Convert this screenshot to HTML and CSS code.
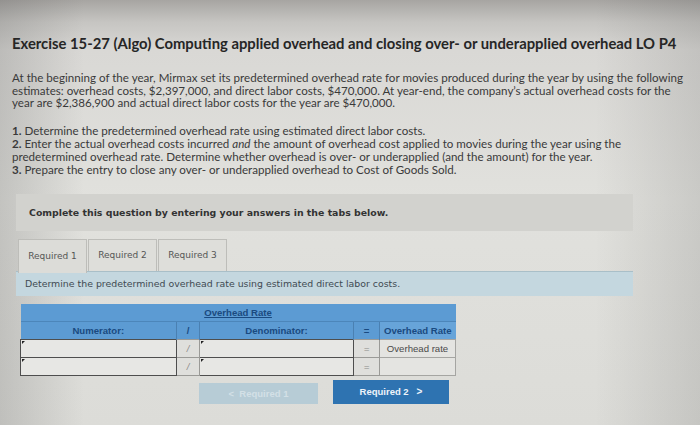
FILE: index.html
```html
<!DOCTYPE html>
<html>
<head>
<meta charset="utf-8">
<link rel="stylesheet" href="styles.css">
</head>
<body>
<div class="page">
  <h1 class="title">Exercise 15-27 (Algo) Computing applied overhead and closing over- or underapplied overhead LO P4</h1>
  <p class="intro">At the beginning of the year, Mirmax set its predetermined overhead rate for movies produced during the year by using the following estimates: overhead costs, $2,397,000, and direct labor costs, $470,000. At year-end, the company’s actual overhead costs for the year are $2,386,900 and actual direct labor costs for the year are $470,000.</p>
  <div class="reqs">
    <div class="req"><span class="num">1.</span> Determine the predetermined overhead rate using estimated direct labor costs.</div>
    <div class="req"><span class="num">2.</span> Enter the actual overhead costs incurred <span class="em">and</span> the amount of overhead cost applied to movies during the year using the<br><span class="line">predetermined overhead rate. Determine whether overhead is over- or underapplied (and the amount) for the year.</span></div>
    <div class="req"><span class="num">3.</span> Prepare the entry to close any over- or underapplied overhead to Cost of Goods Sold.</div>
  </div>
  <div class="notice">Complete this question by entering your answers in the tabs below.</div>
  <div class="tabs">
    <div class="tab active">Required 1</div>
    <div class="tab">Required 2</div>
    <div class="tab">Required 3</div>
  </div>
  <div class="band">Determine the predetermined overhead rate using estimated direct labor costs.</div>
  <table class="grid">
    <colgroup>
      <col class="c-num"><col class="c-op"><col class="c-den"><col class="c-op2"><col class="c-res">
    </colgroup>
    <tr class="h1"><th colspan="5"><span>Overhead Rate</span></th></tr>
    <tr class="h2">
      <th>Numerator:</th>
      <th>/</th>
      <th>Denominator:</th>
      <th>=</th>
      <th>Overhead Rate</th>
    </tr>
    <tr class="row">
      <td class="inp"><span class="mark"></span></td>
      <td class="op">/</td>
      <td class="inp"><span class="mark"></span></td>
      <td class="op">=</td>
      <td class="res">Overhead rate</td>
    </tr>
    <tr class="row">
      <td class="inp"><span class="mark"></span></td>
      <td class="op">/</td>
      <td class="inp"><span class="mark"></span></td>
      <td class="op">=</td>
      <td class="res"></td>
    </tr>
  </table>
  <div class="nav">
    <div class="btn prev">&lt;&nbsp;&nbsp;Required 1</div>
    <div class="btn next">Required 2&nbsp;&nbsp;&nbsp;<span class="chev">&gt;</span></div>
  </div>
</div>
</body>
</html>
```
FILE: styles.css
```css
html, body {
  margin: 0;
  padding: 0;
}
body {
  width: 700px;
  height: 425px;
  overflow: hidden;
  background:
    linear-gradient(to right, rgba(60,60,60,0.18) 0, rgba(60,60,60,0) 12%, rgba(60,60,60,0) 85%, rgba(60,60,60,0.14) 100%),
    linear-gradient(to bottom, #a7a5a2 0, #c6c5c2 22px, #d9d8d5 50px, #e1e1dd 200px, #dcdcd8 425px);
  font-family: Lato, "Open Sans", sans-serif;
  color: #2d2d2d;
}
.page {
  padding: 34px 0 0 12px;
}
.title {
  margin: 0;
  font-family: Lato, sans-serif;
  font-weight: 700;
  font-size: 14.8px;
  line-height: 18px;
  color: #262626;
  white-space: nowrap;
}
.intro {
  margin: 20px 0 0 0;
  font-size: 11.6px;
  line-height: 12.6px;
  color: #3a3a3a;
  width: 676px;
}
.reqs {
  margin-top: 14px;
  font-size: 11.6px;
  line-height: 13.2px;
  color: #3a3a3a;
  width: 640px;
}
.num {
  font-weight: 700;
}
.em {
  font-style: italic;
}
.notice {
  margin: 17px 0 0 4px;
  height: 37px;
  padding-left: 13px;
  box-sizing: border-box;
  width: 617px;
  background: #d2d2ce;
  display: flex;
  align-items: center;
  font-family: "DejaVu Sans", sans-serif;
  font-weight: 700;
  font-size: 9.4px;
  color: #333;
}
.tabs {
  margin: 8px 0 0 6px;
  display: flex;
  align-items: flex-end;
  height: 32px;
}
.tab {
  height: 32px;
  width: 69px;
  box-sizing: border-box;
  border: 1px solid #bdbdb9;
  border-bottom: none;
  background: #dededa;
  display: flex;
  align-items: center;
  justify-content: center;
  font-family: "DejaVu Sans", sans-serif;
  font-size: 9px;
  color: #555;
}
.tab.active {
  height: 34px;
  margin-bottom: -2px;
  background: #dcdcd8;
  position: relative;
  z-index: 1;
}
.tab + .tab {
  margin-left: 1px;
}
.band {
  margin-left: 4px;
  width: 617px;
  height: 25px;
  box-sizing: border-box;
  padding-left: 9px;
  background: #c4d7df;
  border-top: 1px solid #a9bfc8;
  display: flex;
  align-items: center;
  font-family: "DejaVu Sans", sans-serif;
  font-size: 9.4px;
  color: #3f4a52;
}
.grid {
  margin: 8px 0 0 8px;
  border-collapse: collapse;
  width: 435px;
  table-layout: fixed;
  font-family: "Liberation Sans", Arial, sans-serif;
}
.c-num { width: 156px; }
.c-op { width: 23px; }
.c-den { width: 154px; }
.c-op2 { width: 26px; }
.c-res { width: 76px; }
.grid th {
  background: #5c9bd3;
  color: #1a4a80;
  font-weight: 700;
  font-size: 9.6px;
  padding: 0;
}
.h1 th {
  height: 17px;
  border-bottom: 1px solid #4c86ba;
}
.h1 th span {
  text-decoration: underline;
}
.h2 th {
  height: 17px;
  border-right: 1px solid #4a80b2;
}
.h2 th:last-child {
  border-right: none;
  background: #67a4d9;
}
.row td {
  height: 17px;
  padding: 0;
  font-size: 9.6px;
}
.inp {
  background: #e7e7e4;
  border: 1.5px solid #4e4e4e;
  position: relative;
}
.mark {
  position: absolute;
  left: 1px;
  top: 1px;
  width: 0;
  height: 0;
  border-top: 3px solid #222;
  border-right: 3px solid transparent;
}
.op {
  background: #dfdfdc;
  border: 1px solid #9a9a97;
  color: #8a8a88;
  text-align: center;
  font-style: italic;
}
.res {
  background: #e4e4e1;
  border: 1px solid #a5a5a2;
  text-align: center;
  color: #4a4a4a;
}
.nav {
  margin: 4px 0 0 187px;
  display: flex;
  align-items: center;
  gap: 15px;
}
.btn {
  display: flex;
  align-items: center;
  justify-content: center;
  font-family: "Liberation Sans", Arial, sans-serif;
  font-weight: 700;
  font-size: 9.5px;
}
.prev {
  width: 119px;
  height: 21px;
  margin-top: 3px;
  background: #b7ccd6;
  color: #d3e0e6;
}
.next {
  width: 116px;
  height: 24px;
  background: #2e73b1;
  color: #eef4fa;
}
.chev {
  font-size: 10px;
}
```
